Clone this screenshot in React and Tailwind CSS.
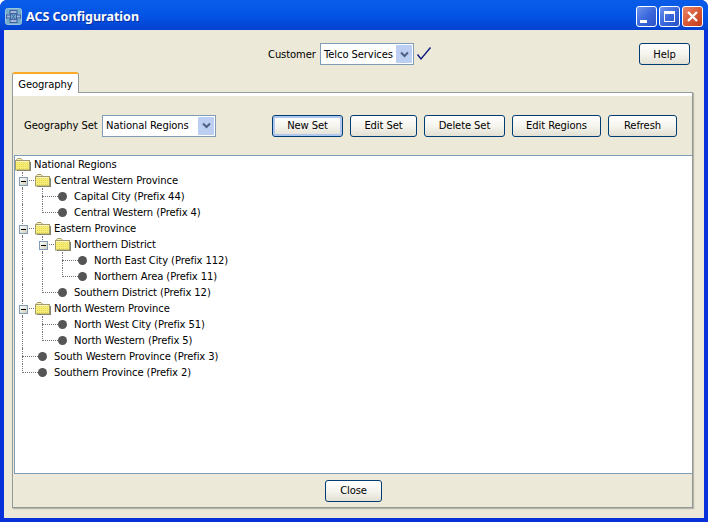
import React from 'react';

const treeRows = [
  { label: 'National Regions', guides: [], type: 'root' },
  { label: 'Central Western Province', guides: [], type: 'folder' },
  { label: 'Capital City (Prefix 44)', guides: [true], type: 'leaf' },
  { label: 'Central Western (Prefix 4)', guides: [true], type: 'leaf', last: true },
  { label: 'Eastern Province', guides: [], type: 'folder' },
  { label: 'Northern District', guides: [true], type: 'folder' },
  { label: 'North East City (Prefix 112)', guides: [true, true], type: 'leaf' },
  { label: 'Northern Area (Prefix 11)', guides: [true, true], type: 'leaf', last: true },
  { label: 'Southern District (Prefix 12)', guides: [true], type: 'leaf', last: true },
  { label: 'North Western Province', guides: [], type: 'folder' },
  { label: 'North West City (Prefix 51)', guides: [true], type: 'leaf' },
  { label: 'North Western (Prefix 5)', guides: [true], type: 'leaf', last: true },
  { label: 'South Western Province (Prefix 3)', guides: [], type: 'leaf' },
  { label: 'Southern Province (Prefix 2)', guides: [], type: 'leaf', last: true },
];

const FolderIcon = ({ id }) => (
  <svg width="16" height="13" viewBox="0 0 16 13" className="block">
    <defs>
      <pattern id={id} width="2" height="2" patternUnits="userSpaceOnUse">
        <rect width="2" height="2" fill="#f6ec78" />
        <rect width="1" height="1" fill="#e8d850" />
      </pattern>
    </defs>
    <path d="M1.5 3 V1.5 L2.5 0.5 H6 L7.5 2 V3" fill="#f7f0b8" stroke="#a39a6c" />
    <rect x="0.5" y="2.5" width="14" height="9.5" fill={`url(#${id})`} stroke="#a39a6c" />
    <path d="M1.5 3.5 H13.5" stroke="#fdf8c8" />
    <path d="M15.5 4 V13 M2 12.5 H15" stroke="#85856f" />
  </svg>
);

const Expander = () => (
  <span className="absolute left-[5px] top-[5px] flex h-[9px] w-[9px] items-center justify-center border border-[#7f9db9] bg-gradient-to-br from-white to-[#d0ccb8]">
    <span className="h-px w-[5px] bg-black" />
  </span>
);

const TreeRow = ({ row, index }) => (
  <div className="flex h-4 items-center">
    {row.guides.map((on, i) => (
      <span key={i} className="relative h-4 w-5 shrink-0">
        {on && <span className="absolute left-2 top-0 h-4 border-l border-dotted border-[#777]" />}
      </span>
    ))}
    {row.type !== 'root' && (
      <span className="relative h-4 w-5 shrink-0">
        <span
          className={`absolute left-2 top-0 border-l border-dotted border-[#777] ${row.last ? 'h-[9px]' : 'h-4'}`}
        />
        <span className="absolute left-2 top-2 w-4 border-t border-dotted border-[#777]" />
        {row.type === 'folder' && <Expander />}
      </span>
    )}
    <span className="flex h-4 w-5 shrink-0 items-center">
      {row.type === 'leaf' ? (
        <span className="relative z-10 ml-1 h-[9px] w-[9px] rounded-full bg-[#555]" />
      ) : (
        <span className="relative z-10 ml-px mt-px bg-white">
          <FolderIcon id={`folder-${index}`} />
        </span>
      )}
    </span>
    <span className="whitespace-nowrap">{row.label}</span>
  </div>
);

const XpButton = ({ children, width, primary }) => (
  <button
    className={`flex h-[22px] items-center justify-center rounded-[3px] border border-[#003c74] bg-gradient-to-b from-white via-[#f5f4ee] to-[#e3e0d3] text-black ${width} ${
      primary ? 'shadow-[inset_0_0_0_2px_#b0c8ee]' : ''
    }`}
  >
    {children}
  </button>
);

const XpSelect = ({ value, width }) => (
  <div className={`flex h-[22px] items-center justify-between border border-[#7f9db9] bg-white pl-0.5 pr-px ${width}`}>
    <span className="whitespace-nowrap pl-px">{value}</span>
    <span className="flex h-[18px] w-[16px] items-center justify-center rounded-[1px] bg-[#bccff2]">
      <svg width="9" height="7" viewBox="0 0 9 7">
        <path d="M1 1.5 L4.5 5 L8 1.5" fill="none" stroke="#4d6185" strokeWidth="2" />
      </svg>
    </span>
  </div>
);

const WinButton = ({ children, close }) => (
  <span
    className={`flex h-[21px] w-[21px] items-center justify-center rounded-[3px] border border-white ${
      close ? 'bg-gradient-to-br from-[#e8866a] via-[#d85a36] to-[#c23a18]' : 'bg-gradient-to-br from-[#6f94ee] via-[#3c68dc] to-[#2a50c8]'
    }`}
  >
    {children}
  </span>
);

const App = () => {
  return (
    <div
      className="flex h-[522px] w-[708px] flex-col overflow-hidden rounded-t-[7px] bg-[#0831d9] text-[10px] tracking-[-0.1px] text-black"
      style={{ fontFamily: '"DejaVu Sans", sans-serif' }}
    >
      {/* title bar */}
      <div className="flex h-[30px] shrink-0 items-center bg-gradient-to-b from-[#0a5ce8] via-[#0354e6] to-[#0342d0] pl-[5px] pr-[5px] pt-[3px]">
        <svg width="17" height="17" viewBox="0 0 17 17" className="shrink-0">
          <rect x="0.5" y="0.5" width="16" height="16" rx="2" fill="#74aecb" stroke="#9cc4dc" />
          <path d="M7 5 L4 8 M10 5 L13 8 M7 12 L4 9 M10 12 L13 9 M6 5 L11 12 M11 5 L6 12" stroke="#3f5f9f" />
          <rect x="5" y="2.5" width="7" height="3" fill="#a6b8dc" stroke="#3f5f9f" />
          <rect x="5" y="11.5" width="7" height="3" fill="#a6b8dc" stroke="#3f5f9f" />
          <rect x="1.5" y="7" width="4" height="3" fill="#a6b8dc" stroke="#3f5f9f" />
          <rect x="11.5" y="7" width="4" height="3" fill="#a6b8dc" stroke="#3f5f9f" />
        </svg>
        <span
          className="ml-1 mt-px text-[12.5px] font-bold tracking-normal text-white [text-shadow:1px_1px_#0f2f9c]"
          style={{ fontFamily: '"Noto Sans", sans-serif' }}
        >
          ACS Configuration
        </span>
        <div className="ml-auto flex gap-0.5">
          <WinButton>
            <span className="mt-[9px] mr-1.5 h-[3px] w-[7px] bg-white" />
          </WinButton>
          <WinButton>
            <span className="h-[11px] w-[11px] border border-t-[3px] border-white" />
          </WinButton>
          <WinButton close>
            <svg width="13" height="13" viewBox="0 0 13 13">
              <path d="M2 2 L11 11 M11 2 L2 11" stroke="white" strokeWidth="2.4" />
            </svg>
          </WinButton>
        </div>
      </div>

      {/* body */}
      <div className="mx-1 mb-1 flex min-h-0 flex-1 flex-col bg-[#ece9d8] pl-2 pr-[11px]">
        <div className="flex h-[42px] shrink-0 items-center pt-[6px] pl-[256px] pr-[3px]">
          <span className="w-[52px] whitespace-nowrap">Customer</span>
          <XpSelect value="Telco Services" width="w-[94px]" />
          <svg width="16" height="16" viewBox="0 0 16 16" className="ml-0.5">
            <path d="M1.5 8.5 L5 13 L14.5 1.5" fill="none" stroke="#0a1a7c" strokeWidth="1.4" />
          </svg>
          <div className="ml-auto">
            <XpButton width="w-[51px]">Help</XpButton>
          </div>
        </div>

        {/* tab */}
        <div className="relative z-10 -mb-px flex h-[21px] w-[67px] shrink-0 items-center justify-center rounded-t-[3px] border-x border-[#919b9c] border-t-2 border-t-[#ffa929] bg-white pt-px">
          Geography
        </div>

        {/* tab panel */}
        <div className="flex h-[416px] shrink-0 flex-col border border-[#919b9c] bg-[#ece9d8] shadow-[1px_1px_1px_#b8b5a6]">
          <div className="h-[3px] shrink-0 bg-white" />
          <div className="flex h-[59px] shrink-0 items-center pl-[11px]">
            <span className="mr-1.5 w-[72px] whitespace-nowrap">Geography Set</span>
            <XpSelect value="National Regions" width="w-[114px]" />
            <div className="ml-14 flex gap-[7px]">
              <XpButton width="w-[71px]" primary>New Set</XpButton>
              <XpButton width="w-[67px]">Edit Set</XpButton>
              <XpButton width="w-[81px]">Delete Set</XpButton>
              <XpButton width="w-[89px]">Edit Regions</XpButton>
              <XpButton width="w-[69px]">Refresh</XpButton>
            </div>
          </div>

          {/* tree */}
          <div className="ml-px h-[319px] shrink-0 border border-r-0 border-[#7f9db9] bg-white">
            <div className="-ml-px">
              {treeRows.map((row, i) => (
                <TreeRow key={row.label} row={row} index={i} />
              ))}
            </div>
          </div>

          <div className="flex flex-1 items-center justify-center pl-0.5">
            <XpButton width="w-[57px]">Close</XpButton>
          </div>
        </div>
      </div>
    </div>
  );
};

export default App;
